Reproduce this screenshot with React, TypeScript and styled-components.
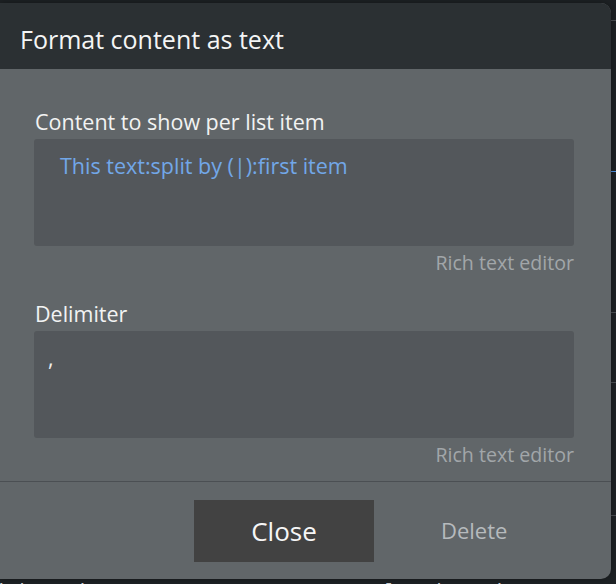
import React from "react";
import styled, { createGlobalStyle } from "styled-components";

const Global = createGlobalStyle`
  html, body { margin: 0; padding: 0; background: #1d2124; }
  body { font-family: "Open Sans", "Noto Sans", sans-serif; }
`;

const Page = styled.div`
  position: relative;
  width: 616px;
  height: 584px;
  overflow: hidden;
  background: #1d2124;
`;

const Backdrop = styled.div`
  display: flex;
  flex-direction: column;
  width: 100%;
`;

const BackdropRow = styled.div<{ $h: number; $line?: string }>`
  height: ${(p) => p.$h}px;
  border-bottom: 1px solid ${(p) => p.$line || "#4a4e52"};
  box-sizing: border-box;
`;

const BackdropText = styled.div`
  display: flex;
  gap: 164px;
  padding: 9px 0 0 0;
  margin-left: -20px;
  font-family: "DejaVu Sans Mono", monospace;
  font-size: 20px;
  line-height: 24px;
  color: #cfd2d4;
  white-space: nowrap;
`;

const Modal = styled.div`
  position: absolute;
  left: 0;
  top: 3px;
  width: 611px;
  height: 576px;
  display: flex;
  flex-direction: column;
  background: #616669;
  border-radius: 0 10px 10px 0;
  overflow: hidden;
  box-shadow: 0 0 6px rgba(0, 0, 0, 0.35);
`;

const Header = styled.div`
  height: 66px;
  flex: none;
  display: flex;
  align-items: center;
  padding: 6px 0 0 20px;
  box-sizing: border-box;
  background: #2b3033;
  color: #f4f5f5;
  font-size: 25px;
`;

const Body = styled.div`
  display: flex;
  flex-direction: column;
  padding: 40px 37px 14px 34px;
`;

const Label = styled.div<{ $top?: number }>`
  margin-top: ${(p) => p.$top || 0}px;
  padding-left: 1px;
  font-size: 21.5px;
  line-height: 26px;
  color: #f2f3f3;
`;

const Editor = styled.div<{ $pad: number }>`
  margin-top: 4px;
  height: 107px;
  box-sizing: border-box;
  padding: 13px ${(p) => p.$pad}px;
  background: #53575b;
  border-radius: 3px;
  font-size: 21.5px;
  line-height: 28px;
`;

const Dynamic = styled.span`
  color: #72a7e8;
`;

const Plain = styled.span`
  color: #eeeeee;
`;

const Hint = styled.div`
  margin-top: 5px;
  text-align: right;
  font-size: 19.6px;
  line-height: 24px;
  color: #a2a6a9;
`;

const Divider = styled.div`
  height: 1px;
  background: #4b4f53;
  flex: none;
`;

const Footer = styled.div`
  display: flex;
  align-items: center;
  padding: 18px 0 17px 194px;
  gap: 67px;
`;

const CloseButton = styled.button`
  width: 180px;
  height: 62px;
  border: none;
  border-radius: 0;
  background: #424242;
  color: #f6f6f6;
  font-family: "Open Sans", "Noto Sans", sans-serif;
  font-size: 26px;
  padding-bottom: 2px;
  cursor: pointer;
`;

const DeleteButton = styled.button`
  border: none;
  background: none;
  padding: 0 0 2px 0;
  color: #b6babd;
  font-family: "Open Sans", "Noto Sans", sans-serif;
  font-size: 22px;
  cursor: pointer;
`;

export default function App() {
  return (
    <>
      <Global />
      <Page>
        <Backdrop>
          <BackdropRow $h={21} />
          <BackdropRow $h={151} $line="#4d8fdc" />
          <BackdropRow $h={141} />
          <BackdropRow $h={70} />
          <BackdropRow $h={133} />
          <BackdropRow $h={54} $line="transparent" />
          <BackdropText>
            <span>ad | topic</span>
            <span>Current color | topic</span>
          </BackdropText>
        </Backdrop>
        <Modal role="dialog" aria-label="Format content as text">
          <Header>Format content as text</Header>
          <Body>
            <Label>Content to show per list item</Label>
            <Editor $pad={26}>
              <Dynamic>This text:split by (|):first item</Dynamic>
            </Editor>
            <Hint>Rich text editor</Hint>
            <Label $top={26}>Delimiter</Label>
            <Editor $pad={14}>
              <Plain>,</Plain>
            </Editor>
            <Hint>Rich text editor</Hint>
          </Body>
          <Divider />
          <Footer>
            <CloseButton>Close</CloseButton>
            <DeleteButton>Delete</DeleteButton>
          </Footer>
        </Modal>
      </Page>
    </>
  );
}
